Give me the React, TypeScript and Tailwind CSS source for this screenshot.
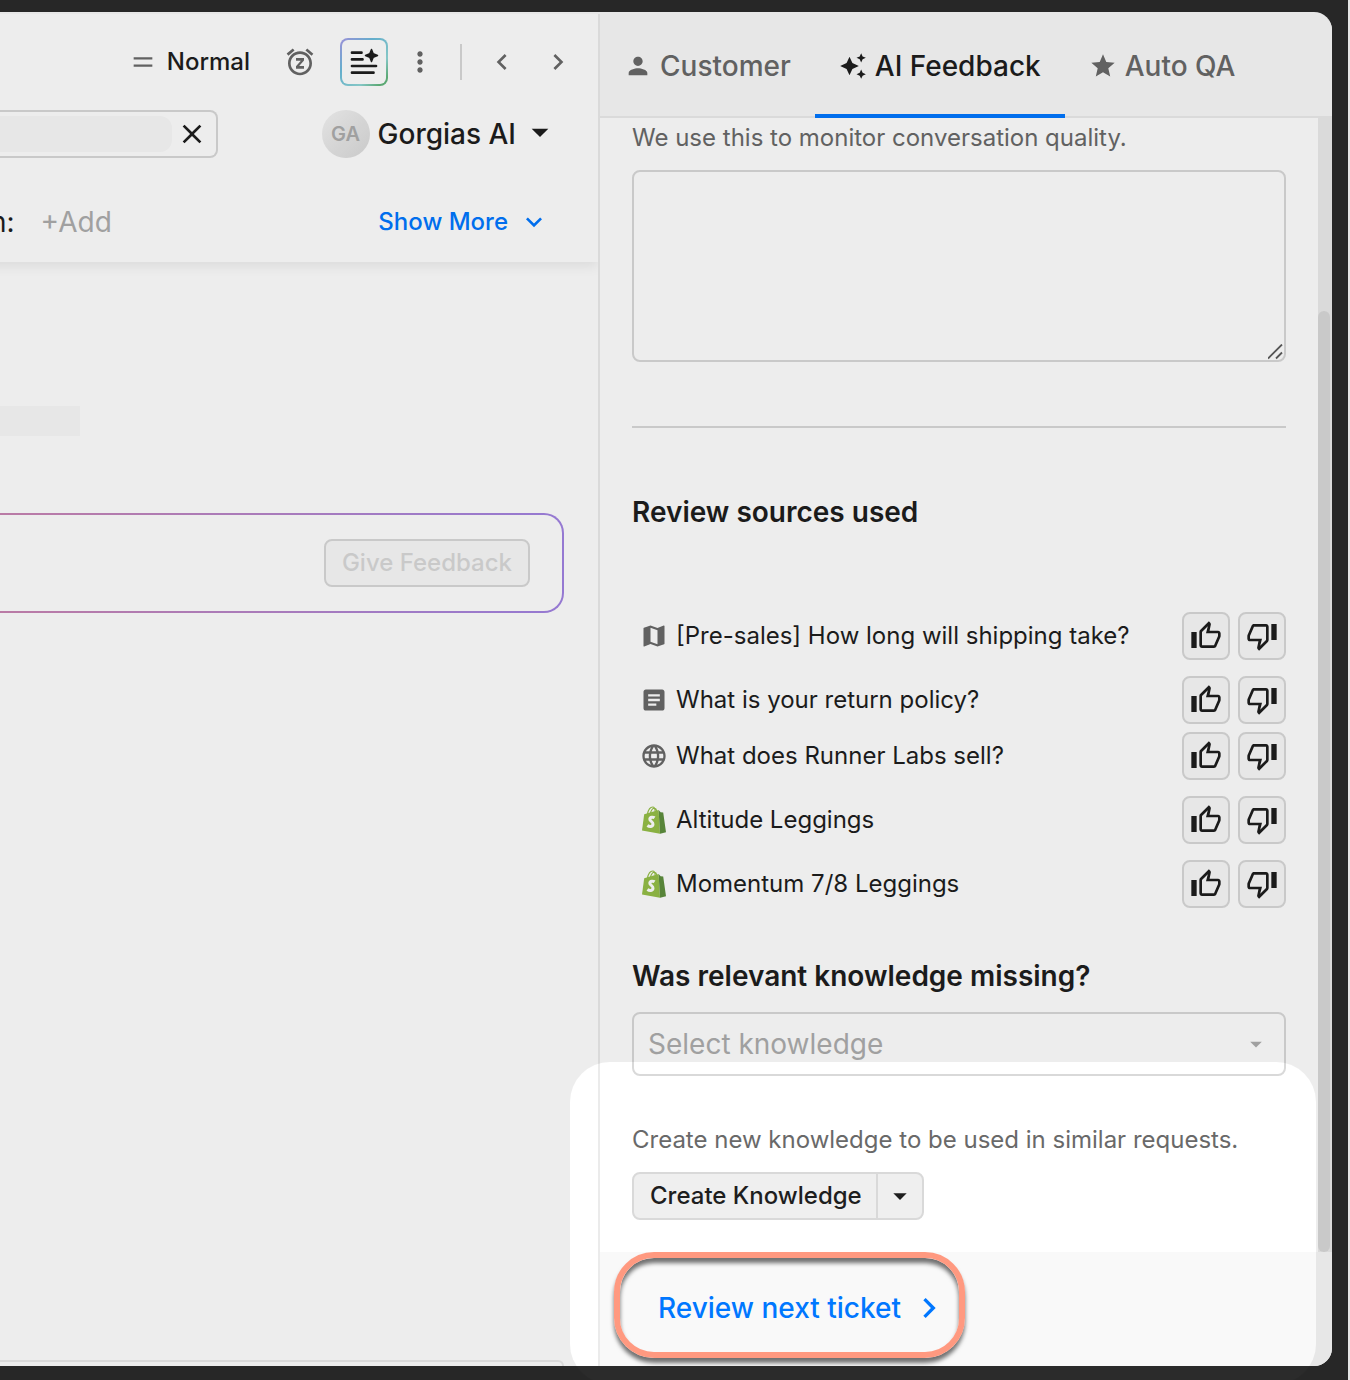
import { useState } from 'react';
import type { ReactNode } from 'react';

type Vote = 'up' | 'down' | null;
type SourceKind = 'guidance' | 'article' | 'website' | 'shopify';

interface Source {
  id: number;
  kind: SourceKind;
  title: string;
}

const SOURCE_GROUPS: Source[][] = [
  [{ id: 1, kind: 'guidance', title: '[Pre-sales] How long will shipping take?' }],
  [
    { id: 2, kind: 'article', title: 'What is your return policy?' },
    { id: 3, kind: 'website', title: 'What does Runner Labs sell?' },
  ],
  [{ id: 4, kind: 'shopify', title: 'Altitude Leggings' }],
  [{ id: 5, kind: 'shopify', title: 'Momentum 7/8 Leggings' }],
];

interface IconProps {
  d: string;
  className?: string;
}

function Icon({ d, className = 'size-8' }: IconProps) {
  return (
    <svg viewBox="0 0 24 24" fill="currentColor" className={`shrink-0 ${className}`} aria-hidden="true">
      <path d={d} />
    </svg>
  );
}

const ICONS = {
  equal: 'M4 8h16v1.9H4zM4 14.2h16v1.9H4z',
  snooze:
    'M7.88 3.39L6.6 1.86 2 5.71l1.29 1.53 4.59-3.85zM22 5.72l-4.6-3.86-1.29 1.53 4.6 3.86L22 5.72zM12 4c-4.97 0-9 4.03-9 9s4.02 9 9 9c4.97 0 9-4.03 9-9s-4.03-9-9-9zm0 16c-3.87 0-7-3.13-7-7s3.13-7 7-7 7 3.13 7 7-3.13 7-7 7zm-3-9h3.63L9 15.2V17h6v-2h-3.63L15 10.8V9H9v2z',
  more: 'M12 8c1.1 0 2-.9 2-2s-.9-2-2-2-2 .9-2 2 .9 2 2 2zm0 2c-1.1 0-2 .9-2 2s.9 2 2 2 2-.9 2-2-.9-2-2-2zm0 6c-1.1 0-2 .9-2 2s.9 2 2 2 2-.9 2-2-.9-2-2-2z',
  left: 'M15.41 7.41L14 6l-6 6 6 6 1.41-1.41L10.83 12z',
  right: 'M10 6L8.59 7.41 13.17 12l-4.58 4.59L10 18l6-6z',
  down: 'M16.59 8.59L12 13.17 7.41 8.59 6 10l6 6 6-6z',
  caret: 'M7 10l5 5 5-5z',
  close: 'M19 6.41L17.59 5 12 10.59 6.41 5 5 6.41 10.59 12 5 17.59 6.41 19 12 13.41 17.59 19 19 17.59 13.41 12z',
  person: 'M12 12c2.21 0 4-1.79 4-4s-1.79-4-4-4-4 1.79-4 4 1.79 4 4 4zm0 2c-2.67 0-8 1.34-8 4v2h16v-2c0-2.66-5.33-4-8-4z',
  sparkles:
    'M19 9l1.25-2.75L23 5l-2.75-1.25L19 1l-1.25 2.75L15 5l2.75 1.25L19 9zm-7.5.5L9 4 6.5 9.5 1 12l5.5 2.5L9 20l2.5-5.5L17 12l-5.5-2.5zM19 15l-1.25 2.75L15 19l2.75 1.25L19 23l1.25-2.75L23 19l-2.75-1.25L19 15z',
  star: 'M12 17.27L18.18 21l-1.64-7.03L22 9.24l-7.19-.61L12 2 9.19 8.63 2 9.24l5.46 4.73L5.82 21z',
  map: 'M20.5 3l-.16.03L15 5.1 9 3 3.36 4.9c-.21.07-.36.25-.36.48V20.5c0 .28.22.5.5.5l.16-.03L9 18.9l6 2.1 5.64-1.9c.21-.07.36-.25.36-.48V3.5c0-.28-.22-.5-.5-.5zM15 19l-6-2.11V5l6 2.11V19z',
  article:
    'M19 3H5c-1.1 0-2 .9-2 2v14c0 1.1.9 2 2 2h14c1.1 0 2-.9 2-2V5c0-1.1-.9-2-2-2zm-5 14H7v-2h7v2zm3-4H7v-2h10v2zm0-4H7V7h10v2z',
  globe:
    'M11.99 2C6.47 2 2 6.48 2 12s4.47 10 9.99 10C17.52 22 22 17.52 22 12S17.52 2 11.99 2zm6.93 6h-2.95c-.32-1.25-.78-2.45-1.38-3.56 1.84.63 3.37 1.91 4.33 3.56zM12 4.04c.83 1.2 1.48 2.53 1.91 3.96h-3.82c.43-1.43 1.08-2.76 1.91-3.96zM4.26 14C4.1 13.36 4 12.69 4 12s.1-1.36.26-2h3.38c-.08.66-.14 1.32-.14 2s.06 1.34.14 2H4.26zm.82 2h2.95c.32 1.25.78 2.45 1.38 3.56-1.84-.63-3.37-1.9-4.33-3.56zm2.95-8H5.08c.96-1.66 2.49-2.93 4.33-3.56C8.81 5.55 8.35 6.75 8.03 8zM12 19.96c-.83-1.2-1.48-2.53-1.91-3.96h3.82c-.43 1.43-1.08 2.76-1.91 3.96zM14.34 14H9.66c-.09-.66-.16-1.32-.16-2s.07-1.35.16-2h4.68c.09.65.16 1.32.16 2s-.07 1.34-.16 2zm.25 5.56c.6-1.11 1.06-2.31 1.38-3.56h2.95c-.96 1.65-2.49 2.93-4.33 3.56zM16.36 14c.08-.66.14-1.32.14-2s-.06-1.34-.14-2h3.38c.16.64.26 1.31.26 2s-.1 1.36-.26 2h-3.38z',
  thumbUp:
    'M9 21h9c.83 0 1.54-.5 1.84-1.22l3.02-7.05c.09-.23.14-.47.14-.73v-2c0-1.1-.9-2-2-2h-6.31l.95-4.57.03-.32c0-.41-.17-.79-.44-1.06L14.17 1 7.58 7.59C7.22 7.95 7 8.45 7 9v10c0 1.1.9 2 2 2zM9 9l4.34-4.34L12 10h9v2l-3 7H9V9zM1 9h4v12H1z',
  thumbDown:
    'M15 3H6c-.83 0-1.54.5-1.84 1.22l-3.02 7.05c-.09.23-.14.47-.14.73v2c0 1.1.9 2 2 2h6.31l-.95 4.57-.03.32c0 .41.17.79.44 1.06L9.83 23l6.59-6.59c.36-.36.58-.86.58-1.41V5c0-1.1-.9-2-2-2zm0 12l-4.34 4.34L12 14H3v-2l3-7h9v10zm4-12h4v12h-4z',
};

function ShopifyIcon() {
  return (
    <svg viewBox="0 0 24 28" className="h-7 w-6 shrink-0" aria-hidden="true">
      <path
        d="M5.4 8C6.4 3.6 8.7 1 10.7 1c1.5 0 2.4 1.7 2.4 4.6M8.3 7.4C9.3 3.8 11.3 2 12.8 2.3c1 .2 1.7 1.3 1.9 2.9"
        fill="none"
        stroke="#95bf47"
        strokeWidth="1.2"
      />
      <path d="M2.2 8.2 16.6 4 18 27.7 0 24.4z" fill="#95bf47" />
      <path d="M16.6 4l2 2.3 2.6.3L24 26.3l-6 1.4z" fill="#5e8e3e" />
      <path
        d="M12.6 11.8c-1.200-.8-4.600-1.200-4.800 1.200-.2 2.300 3.400 2.500 3.200 5.200-.2 2.800-3.400 2.800-5.600 1.300"
        fill="none"
        stroke="#fff"
        strokeWidth="3"
      />
    </svg>
  );
}

function SourceIcon({ kind }: { kind: SourceKind }) {
  if (kind === 'shopify') return <ShopifyIcon />;
  const d = kind === 'guidance' ? ICONS.map : kind === 'article' ? ICONS.article : ICONS.globe;
  return <Icon d={d} className="size-7 text-[#696969]" />;
}

interface VoteButtonProps {
  label: string;
  icon: string;
  pressed: boolean;
  onClick: () => void;
}

function VoteButton({ label, icon, pressed, onClick }: VoteButtonProps) {
  return (
    <button
      type="button"
      aria-label={label}
      aria-pressed={pressed}
      onClick={onClick}
      className="flex size-12 items-center justify-center rounded-lg border-2 border-[#d9d9d9] bg-[#f9f9f9]"
    >
      <Icon d={icon} />
    </button>
  );
}

function SourceRow({ source }: { source: Source }) {
  const [vote, setVote] = useState<Vote>(null);

  return (
    <li className="flex items-center gap-2">
      <span className="flex w-11 justify-center">
        <SourceIcon kind={source.kind} />
      </span>
      <a href="#source" className="-ml-2 flex-1 text-2xl">
        {source.title}
      </a>
      <VoteButton
        label={`Helpful: ${source.title}`}
        icon={ICONS.thumbUp}
        pressed={vote === 'up'}
        onClick={() => setVote('up')}
      />
      <VoteButton
        label={`Not helpful: ${source.title}`}
        icon={ICONS.thumbDown}
        pressed={vote === 'down'}
        onClick={() => setVote('down')}
      />
    </li>
  );
}

function Tab({ icon, active, children }: { icon: string; active?: boolean; children: ReactNode }) {
  return (
    <button
      type="button"
      role="tab"
      aria-selected={!!active}
      className={
        active
          ? 'flex items-center gap-2 border-b-4 border-[#0077ff] px-6 pt-1 text-[28px] font-medium'
          : 'flex items-center gap-2 border-b-4 border-transparent px-6 pt-1 text-[28px] font-medium text-[#696969]'
      }
    >
      <Icon d={icon} className="size-7" />
      {children}
    </button>
  );
}

function TicketPane() {
  return (
    <main className="flex min-w-0 flex-1 flex-col overflow-hidden">
      <header className="-ml-6 flex flex-col pt-6 pr-6 pl-12 shadow-[0_4px_12px_rgba(0,0,0,0.08)]">
        {/* Ticket toolbar */}
        <div className="flex h-12 items-center justify-end text-[#696969]">
          <button type="button" className="mr-8.5 flex items-center gap-2.5 text-2xl font-medium text-[#1e1e1e]">
            <Icon d={ICONS.equal} className="size-7 text-[#696969]" />
            Normal
          </button>
          <button type="button" aria-label="Snooze" className="mr-6">
            <Icon d={ICONS.snooze} />
          </button>
          <button
            type="button"
            aria-label="Summarize"
            className="mr-4 size-12 rounded-lg bg-[linear-gradient(135deg,#a99bea,#6cbcdc_35%,#8fd6d6_70%,#62b57c_90%)] p-0.5 text-[#1e1e1e]"
          >
            <span className="flex size-full items-center justify-center rounded-md bg-white">
              <svg viewBox="0 0 32 32" className="size-8" aria-hidden="true">
                <path
                  d="M4 6.700h9.500M4 13.400h10.500M4 20h24M4 26.700h21.500"
                  stroke="currentColor"
                  strokeWidth="2.700"
                  strokeLinecap="round"
                />
                <path
                  d="M23.500 3.500l1.700 4.300 4.300 1.700-4.300 1.700-1.700 4.300-1.700-4.300-4.300-1.700 4.300-1.700z"
                  fill="currentColor"
                  stroke="currentColor"
                  strokeWidth="1.500"
                  strokeLinejoin="round"
                />
              </svg>
            </span>
          </button>
          <button type="button" aria-label="More actions" className="mr-6">
            <Icon d={ICONS.more} />
          </button>
          <span className="mr-6 h-9 w-0.5 bg-[#d9d9d9]" />
          <button type="button" aria-label="Previous ticket" className="mr-6">
            <Icon d={ICONS.left} />
          </button>
          <button type="button" aria-label="Next ticket">
            <Icon d={ICONS.right} />
          </button>
        </div>

        {/* Team and assignee */}
        <div className="mt-6 -ml-6 flex items-center justify-between pr-3.5">
          <div className="flex h-12 w-[218px] items-center gap-1 rounded-r-lg border-2 border-l-0 border-[#d9d9d9]">
            <span className="h-9 w-[172px] rounded-r-xl bg-[#f9f9f9]" />
            <button type="button" aria-label="Clear">
              <Icon d={ICONS.close} />
            </button>
          </div>
          <button type="button" className="flex items-center gap-2 text-[28px] font-medium">
            <span className="flex size-12 items-center justify-center rounded-full bg-linear-to-br from-[#f4f4f4] to-[#d9d9d9] text-xl font-semibold text-[#adadad]">
              GA
            </span>
            Gorgias AI
            <Icon d={ICONS.caret} className="mb-1 -ml-1 size-10" />
          </button>
        </div>

        {/* Ticket fields */}
        <div className="mt-10 -ml-8.5 flex h-16 items-start justify-between pr-6">
          <div className="flex gap-6.5 text-[28px] leading-12">
            <span>n:</span>
            <button type="button" className="leading-12 text-[#adadad]">
              +Add
            </button>
          </div>
          <button type="button" className="flex items-center gap-2.5 text-2xl leading-12 font-medium text-[#0077ff]">
            Show More
            <Icon d={ICONS.down} />
          </button>
        </div>
      </header>

      <div className="mt-36 h-[30px] w-20 bg-[#f9f9f9]" />

      <div className="mt-[77px] mr-[34px] rounded-r-[20px] bg-linear-to-r from-[#c985b2] to-[#a183e2] py-0.5 pr-0.5">
        <div className="flex h-24 items-center justify-end rounded-r-[18px] bg-white pr-8">
          <button
            type="button"
            disabled
            className="h-12 rounded-lg border-2 border-[#d9d9d9] bg-[#f9f9f9] px-4 text-2xl font-medium text-[#d9d9d9]"
          >
            Give Feedback
          </button>
        </div>
      </div>

      {/* Top edge of the reply editor */}
      <div className="mt-auto mr-8.5 h-1.5 rounded-tr-lg border-t-2 border-r-2 border-[#ebebeb]" />
    </main>
  );
}

function FeedbackPane() {
  return (
    <aside className="flex w-[734px] shrink-0 flex-col border-l-2 border-[#ebebeb]">
      <div role="tablist" className="flex h-[104px] border-b-2 border-[#ebebeb] bg-[#f9f9f9]">
        <div className="-mb-0.5 flex">
          <Tab icon={ICONS.person}>Customer</Tab>
          <Tab icon={ICONS.sparkles} active>
            AI Feedback
          </Tab>
          <Tab icon={ICONS.star}>Auto QA</Tab>
        </div>
      </div>

      <div className="flex flex-1">
        <div className="flex-1 px-8">
          <label htmlFor="feedback" className="block text-2xl leading-10 text-[#696969]">
            We use this to monitor conversation quality.
          </label>
          <div className="relative mt-3">
            <textarea id="feedback" className="block h-48 w-full resize-none rounded-lg border-2 border-[#d9d9d9] bg-white" />
            <svg viewBox="0 0 16 16" className="absolute right-0.5 bottom-0.5 size-4" aria-hidden="true">
              <path d="M0 14.500 14 .5M8 14.500l6-6" stroke="#5c5c5c" strokeWidth="1.800" />
            </svg>
          </div>

          <hr className="mt-16 border-t-2 border-[#d9d9d9]" />

          <h2 className="mt-16 text-[28px] leading-10 font-semibold">Review sources used</h2>
          <div className="mt-20 flex flex-col gap-4">
            {SOURCE_GROUPS.map((group) => (
              <ul key={group[0].id} className="flex flex-col gap-2">
                {group.map((source) => (
                  <SourceRow key={source.id} source={source} />
                ))}
              </ul>
            ))}
          </div>

          <h2 className="mt-12 text-[28px] leading-10 font-semibold">
            <label htmlFor="knowledge">Was relevant knowledge missing?</label>
          </h2>
          <div className="relative mt-4">
            <select
              id="knowledge"
              className="block h-16 w-full appearance-none rounded-lg border-2 border-[#d9d9d9] bg-white px-3.5 text-[28px] text-[#adadad]"
            >
              <option>Select knowledge</option>
            </select>
            <Icon d={ICONS.caret} className="pointer-events-none absolute top-4.5 right-4 size-7 text-[#adadad]" />
          </div>

          <p className="mt-11 text-2xl leading-10 text-[#696969]">Create new knowledge to be used in similar requests.</p>
          <div className="mt-3 mb-8 flex h-12 w-fit rounded-lg border-2 border-[#d9d9d9] bg-[#efefef]">
            <button type="button" className="pr-3.5 pl-4 text-2xl font-medium">
              Create Knowledge
            </button>
            <button
              type="button"
              aria-label="More options"
              className="flex w-[46px] items-center justify-center border-l-2 border-[#d9d9d9]"
            >
              <Icon d={ICONS.caret} />
            </button>
          </div>
        </div>

        {/* Scrollbar */}
        <div className="flex w-3.5 flex-col bg-[#ebebeb] pt-[193px] pr-0.5">
          <div className="flex-1 rounded-full bg-[#d9d9d9]" />
        </div>
      </div>

      <footer className="flex h-[114px] items-start bg-[#f9f9f9] px-3.5">
        <a
          href="#next"
          className="flex h-[106px] items-center gap-2 rounded-[40px] border-[6px] border-[#ff9980] pt-1.5 pr-2.5 pl-[38px] text-[28px] font-medium text-[#0077ff] shadow-[0_5px_4px_rgba(0,0,0,0.55),inset_0_5px_4px_rgba(0,0,0,0.55)]"
        >
          Review next ticket
          <Icon d={ICONS.right} className="size-10" />
        </a>
      </footer>
    </aside>
  );
}

export default function App() {
  return (
    <div className="relative flex min-h-screen overflow-hidden border-r-2 border-[#e5e5e5] bg-[#2b2b2b] pt-3 pr-4 pb-3.5 font-[Inter,sans-serif] text-[#1e1e1e]">
      <div className="flex min-w-0 flex-1 overflow-hidden rounded-r-[18px] border-t-2 border-[#f9f9f9] bg-white">
        <TicketPane />
        <FeedbackPane />
      </div>

      {/* Spotlight: dims everything but the bottom of the feedback pane */}
      <div className="pointer-events-none absolute right-8 -bottom-1 h-[322px] w-[746px] rounded-[40px] shadow-[0_0_0_2000px_rgba(0,0,0,0.07)]" />
    </div>
  );
}
